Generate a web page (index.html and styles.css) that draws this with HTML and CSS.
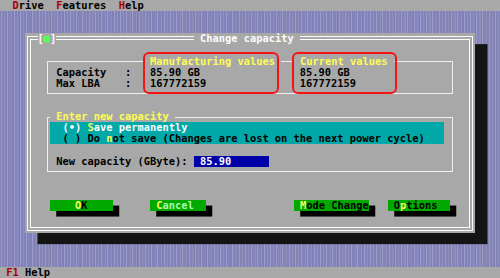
FILE: index.html
```html
<!DOCTYPE html>
<html lang="en">
<head>
    <meta charset="UTF-8">
    <meta name="viewport" content="width=device-width, initial-scale=1.0">
    <title>Change capacity</title>
    <link rel="stylesheet" href="styles.css">
</head>
<body>
    <div class="screen">
        <div class="menubar"><span class="hot">D</span>rive  <span class="hot">F</span>eatures  <span class="hot">H</span>elp</div>

        <div class="desktop">
            <div class="dialog">
                <div class="frame"></div>
                <div class="close">[<span class="close-box">■</span>]</div>
                <div class="title"> Change capacity </div>

                <!-- current / manufacturing values -->
                <div class="group info-frame"></div>
                <div class="group-label head-manuf"> Manufacturing values </div>
                <div class="group-label head-current"> Current values </div>
                <div class="info-row row-capacity">Capacity   :   85.90 GB                85.90 GB</div>
                <div class="info-row row-lba">Max LBA    :   167772159               167772159</div>
                <div class="mark mark-manuf"></div>
                <div class="mark mark-current"></div>

                <!-- new capacity -->
                <div class="group enter-frame"></div>
                <div class="group-label enter-label"> Enter new capacity </div>
                <div class="radios">
                    <div class="radio selected">  (•) <span class="key">S</span>ave permanently</div>
                    <div class="radio">  ( ) Do <span class="key">n</span>ot save (Changes are lost on the next power cycle)</div>
                </div>
                <div class="field-label">New capacity (GByte):</div>
                <div class="input"> 85.90</div>

                <div class="btn btn-ok">    <span class="key">O</span>K</div>
                <div class="btn btn-cancel default"> <span class="key">C</span>ancel</div>
                <div class="btn btn-mode"> <span class="key">M</span>ode Change</div>
                <div class="btn btn-options"> O<span class="key">p</span>tions</div>
            </div>
        </div>

        <div class="statusbar"> <span class="hot">F1</span> Help</div>
    </div>
</body>
</html>
```

FILE: styles.css
```css
body {
    margin: 0;
    background-color: #a8a8a8;
    font-family: "DejaVu Sans Mono", monospace;
    font-weight: bold;
    font-size: 10.38px;
    line-height: 11.12px;
    color: #000;
}
.screen {
    width: 500px;
    height: 278px;
    display: flex;
    flex-direction: column;
    overflow: hidden;
}
.menubar, .statusbar {
    height: 11.12px;
    flex: none;
    white-space: pre;
    background-color: #a8a8a8;
}
.menubar {
    padding-left: 12.5px;
}
.hot {
    color: #a80000;
}
.desktop {
    height: 255.76px;
    flex: none;
    box-sizing: border-box;
    padding: 22.24px 0 0 25px;
    background-color: #8484bc;
    background-image: repeating-linear-gradient(90deg,
        #8080b6 0, #8080b6 1px,
        #9c9cca 1px, #9c9cca 2px,
        #8484bc 2px, #8484bc 4.5px,
        #9090b4 4.5px, #9090b4 5.5px,
        #8484bc 5.5px, #8484bc 6.25px);
}

/* dialog is a character grid: 72 columns x 18 rows */
.dialog {
    width: 450px;
    display: grid;
    grid-template-columns: repeat(72, 6.25px);
    grid-template-rows: repeat(18, 11.12px);
    background-color: #a8a8a8;
    box-shadow: 12.5px 11.12px 0 #141414;
}
.frame {
    grid-area: 1 / 1 / -1 / -1;
    margin: 3px 2px 2.5px 1.5px;
    border: 4px double #fcfcfc;
}
.close, .title, .group-label, .info-row, .radio, .field-label, .input, .btn {
    white-space: pre;
}
.close {
    grid-area: 1 / 3 / 2 / 6;
    background-color: #a8a8a8;
    color: #fcfcfc;
}
.close-box {
    color: #54fc54;
}
.title {
    grid-area: 1 / 28 / 2 / 45;
    background-color: #a8a8a8;
    color: #fcfcfc;
}

.group {
    margin: 5.56px 3.125px;
    border: 1px solid #f0f0f0;
}
.group-label {
    background-color: #a8a8a8;
    color: #fcfc54;
}
.info-frame {
    grid-area: 3 / 4 / 7 / 70;
}
.head-manuf {
    grid-area: 3 / 20 / 4 / 42;
}
.head-current {
    grid-area: 3 / 44 / 4 / 60;
}
.info-row {
    grid-column: 6 / 70;
}
.row-capacity {
    grid-row: 4;
}
.row-lba {
    grid-row: 5;
}
.mark {
    border: 2.5px solid #f41414;
    border-radius: 6px;
}
.mark-manuf {
    grid-area: 3 / 20 / 6 / 42;
    margin: -3.6px 2.25px -5px -0.75px;
}
.mark-current {
    grid-area: 3 / 44 / 6 / 60;
    margin: -3.6px -3.25px -5px -1.75px;
}

.enter-frame {
    grid-area: 8 / 4 / 14 / 70;
}
.enter-label {
    grid-area: 8 / 5 / 9 / 25;
}
.radios {
    grid-area: 9 / 5 / 11 / 68;
    background-color: #00a8a8;
}
.radio.selected {
    color: #fcfcfc;
}
.key {
    color: #fcfc54;
}
.field-label {
    grid-area: 12 / 6 / 13 / 28;
}
.input {
    grid-area: 12 / 28 / 13 / 40;
    background-color: #0000a8;
    color: #fcfcfc;
}

.btn {
    grid-row: 16;
    background-color: #00a800;
    box-shadow: 6.25px 5.56px 0 #000;
}
.btn.default {
    color: #a8fca8;
}
.btn-ok {
    grid-column: 5 / 15;
}
.btn-cancel {
    grid-column: 21 / 30;
}
.btn-mode {
    grid-column: 44 / 56;
}
.btn-options {
    grid-column: 59 / 69;
}
```
